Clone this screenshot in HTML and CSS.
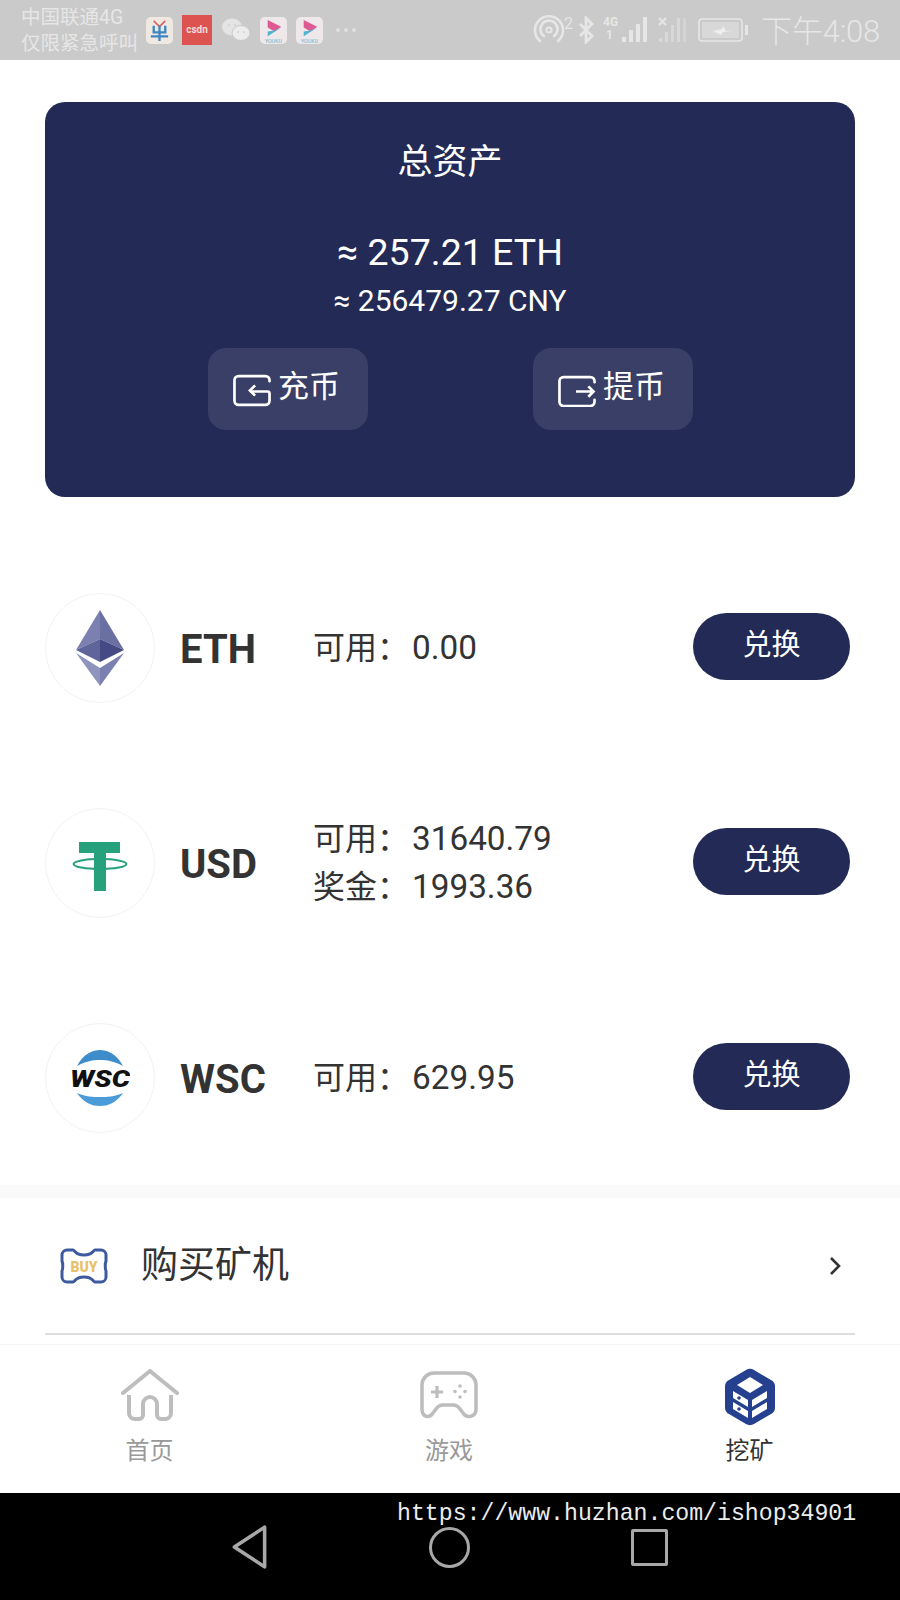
FILE: index.html
```html
<!DOCTYPE html>
<html lang="zh-CN">
<head>
    <meta charset="UTF-8">
    <title>资产</title>
    <link rel="stylesheet" href="styles.css">
</head>
<body>
    <div class="app">
        <!-- status bar -->
        <header class="status-bar">
            <div class="carrier">
                <p>中国联通4G</p>
                <p>仅限紧急呼叫</p>
            </div>
            <div class="notify-icons">
                <svg class="notify notify-round" viewBox="0 0 28 28"><rect width="28" height="28" rx="5" fill="#efe9e1"/><path d="M8 4l6 6 6-6" fill="none" stroke="#d8615f" stroke-width="1.6"/><path d="M8 9v7h12V9M5 20h18M14 9v16" fill="none" stroke="#3d86c6" stroke-width="2.4"/></svg>
                <div class="notify-csdn">csdn</div>
                <svg class="notify notify-wechat" viewBox="0 0 30 26"><ellipse cx="11" cy="10" rx="10" ry="8.500" fill="#e4e4e4"/><ellipse cx="20" cy="16" rx="9" ry="7.500" fill="#ececec" stroke="#cacaca"/><circle cx="8" cy="8" r="1.200" fill="#d4d4d4"/><circle cx="14" cy="8" r="1.200" fill="#d4d4d4"/><circle cx="17" cy="15" r="1" fill="#d4d4d4"/><circle cx="23" cy="15" r="1" fill="#d4d4d4"/></svg>
                <svg class="notify notify-round" viewBox="0 0 28 28"><rect width="28" height="28" rx="5" fill="#eee8ea"/><path d="M8 3l14 7-7 5-7-4z" fill="#dd5b92"/><path d="M22 11l-14 9v-5l7-1z" fill="#4fb3d0"/><text x="14" y="26.500" class="youku-text">YOUKU</text></svg>
                <svg class="notify notify-round" viewBox="0 0 28 28"><rect width="28" height="28" rx="5" fill="#eee8ea"/><path d="M8 3l14 7-7 5-7-4z" fill="#dd5b92"/><path d="M22 11l-14 9v-5l7-1z" fill="#4fb3d0"/><text x="14" y="26.500" class="youku-text">YOUKU</text></svg>
                <div class="notify-more">
                    <i></i><i></i><i></i>
                </div>
            </div>
            <div class="system-icons">
                <svg class="sys-hotspot" viewBox="0 0 44 30"><path d="M8 26a14 14 0 1 1 18 0M12 21a8.500 8.500 0 1 1 10 0" fill="none" stroke="#e6e6e6" stroke-width="2.600" stroke-linecap="round"/><circle cx="17" cy="15" r="2.600" fill="none" stroke="#e6e6e6" stroke-width="2"/><text x="32" y="14" class="sys-sup">2</text></svg>
                <svg class="sys-bt" viewBox="0 0 18 28"><path d="M3 8l12 12-6 6V2l6 6L3 20" fill="none" stroke="#e6e6e6" stroke-width="2.800"/></svg>
                <svg class="sys-signal" viewBox="0 0 46 30"><text x="0" y="11" class="sys-4g">4G</text><text x="3" y="24" class="sys-4g">1</text><rect x="19" y="22" width="4" height="5" fill="#e6e6e6"/><rect x="26" y="15" width="4" height="12" fill="#e6e6e6"/><rect x="33" y="9" width="4" height="18" fill="#e6e6e6"/><rect x="40" y="2" width="4" height="25" fill="#e6e6e6"/></svg>
                <svg class="sys-signal-off" viewBox="0 0 32 30"><path d="M3 3l7 7M10 3l-7 7" stroke="#e6e6e6" stroke-width="2"/><rect x="3" y="23" width="3" height="4" fill="#d8d8d8"/><rect x="9" y="17" width="3" height="10" fill="#d8d8d8"/><rect x="15" y="10" width="3" height="17" fill="#d8d8d8"/><rect x="21" y="3" width="3" height="24" fill="#d8d8d8"/><rect x="27" y="3" width="3" height="24" fill="#d4d4d4"/></svg>
                <svg class="sys-battery" viewBox="0 0 52 26"><rect x="1" y="2" width="43" height="22" rx="3" fill="none" stroke="#e6e6e6" stroke-width="1.600"/><rect x="4" y="5" width="37" height="16" fill="#d8d8d8"/><rect x="47" y="8" width="3" height="10" fill="#e6e6e6"/><path d="M15 14l9-2 1-3 3 5 6 0-9 1-2 3z" fill="#eeeeee"/></svg>
                <span class="clock">下午4:08</span>
            </div>
        </header>

        <main class="content">
            <section class="total-card">
                <h1 class="total-title">总资产</h1>
                <p class="total-eth">≈ 257.21 ETH</p>
                <p class="total-cny">≈ 256479.27 CNY</p>
                <div class="total-actions">
                    <a class="action-btn">
                        <svg class="action-icon" viewBox="0 0 38 32"><path d="M36 8V7a4 4 0 0 0-4-4H6a4 4 0 0 0-4 4v20a4 4 0 0 0 4 4h26a4 4 0 0 0 4-4v-7a2 2 0 0 0-2-2H18" fill="none" stroke="#fff" stroke-width="2.600" stroke-linecap="round" transform="translate(0 -1)"/><path d="M22 12l-5 5 5 5" fill="none" stroke="#fff" stroke-width="2.600" transform="translate(0 -1)"/></svg>
                        <span>充币</span>
                    </a>
                    <a class="action-btn">
                        <svg class="action-icon" viewBox="0 0 38 32"><path d="M36 8V7a4 4 0 0 0-4-4H6a4 4 0 0 0-4 4v20a4 4 0 0 0 4 4h26a4 4 0 0 0 4-4v-2" fill="none" stroke="#fff" stroke-width="2.600" stroke-linecap="round"/><path d="M18 17h17M30 12l5 5-5 5" fill="none" stroke="#fff" stroke-width="2.600"/></svg>
                        <span>提币</span>
                    </a>
                </div>
            </section>

            <section class="coin-list">
                <div class="coin-row">
                    <div class="coin-logo">
                        <svg class="logo-eth" viewBox="0 0 48 76">
                            <path d="M24 0L0 40l24-11z" fill="#7b80b0"/>
                            <path d="M24 0l24 40-24-11z" fill="#6b70a3"/>
                            <path d="M0 40l24-11v23z" fill="#5f649b"/>
                            <path d="M48 40L24 29v23z" fill="#454a85"/>
                            <path d="M0 43l24 15v18z" fill="#8f94bf"/>
                            <path d="M48 43L24 58v18z" fill="#7b80b0"/>
                        </svg>
                    </div>
                    <div class="coin-name">ETH</div>
                    <div class="coin-amounts">
                        <p>可用：<span class="num">0.00</span></p>
                    </div>
                    <a class="swap-btn">兑换</a>
                </div>

                <div class="coin-row">
                    <div class="coin-logo">
                        <svg class="logo-usd" viewBox="0 0 56 50">
                            <path d="M7 0h41v11H34v38H22V11H7z" fill="#26a17b"/>
                            <ellipse cx="28" cy="22" rx="26.500" ry="5" fill="none" stroke="#26a17b" stroke-width="2"/>
                        </svg>
                    </div>
                    <div class="coin-name">USD</div>
                    <div class="coin-amounts">
                        <p>可用：<span class="num">31640.79</span></p>
                        <p>奖金：<span class="num">1993.36</span></p>
                    </div>
                    <a class="swap-btn">兑换</a>
                </div>

                <div class="coin-row">
                    <div class="coin-logo">
                        <svg class="logo-wsc" viewBox="0 0 60 56">
                            <path d="M7 16C14 3 23 0 30 0s16 3 23 16C44 11 37 10 30 10s-14 1-23 6z" fill="#3f8ccb"/>
                            <path d="M7 43c9 4 16 4 23 4s14 0 23-4c-7 10-15 13-23 13S14 53 7 43z" fill="#4a9bd8"/>
                            <text x="0" y="37" class="wsc-text" textLength="60" lengthAdjust="spacingAndGlyphs">WSC</text>
                        </svg>
                    </div>
                    <div class="coin-name">WSC</div>
                    <div class="coin-amounts">
                        <p>可用：<span class="num">629.95</span></p>
                    </div>
                    <a class="swap-btn">兑换</a>
                </div>
            </section>

            <div class="band"></div>

            <a class="menu-row">
                <svg class="buy-icon" viewBox="0 0 48 36">
                    <path d="M7 2h6c2 0 2 5 11 5s9-5 11-5h6a5 5 0 0 1 5 5v6c-1 2-1 8 0 10v6a5 5 0 0 1-5 5h-6c-2 0-2-5-11-5s-9 5-11 5H7a5 5 0 0 1-5-5v-6c1-2 1-8 0-10V7a5 5 0 0 1 5-5z" fill="none" stroke="#3d5a9e" stroke-width="3"/>
                    <text x="24" y="23.500" class="buy-text">BUY</text>
                </svg>
                <span class="menu-label">购买矿机</span>
                <svg class="chevron" viewBox="0 0 12 20"><path d="M2 2l8 8-8 8" fill="none" stroke="#333" stroke-width="2.600"/></svg>
            </a>
            <div class="menu-line"></div>
        </main>

        <nav class="tab-bar">
            <a class="tab">
                <svg class="tab-icon" viewBox="0 0 58 52"><path d="M2 24L29 2l27 22" fill="none" stroke="#bdbdbd" stroke-width="4" stroke-linecap="round" stroke-linejoin="round"/><path d="M8 26v18a6 6 0 0 0 6 6h4a4 4 0 0 0 4-4V35a7 7 0 0 1 14 0v11a4 4 0 0 0 4 4h4a6 6 0 0 0 6-6V26" fill="none" stroke="#bdbdbd" stroke-width="4"/></svg>
                <span>首页</span>
            </a>
            <a class="tab">
                <svg class="tab-icon" viewBox="0 0 58 48"><path d="M14 2h30a12 12 0 0 1 12 12v24c0 8-9 10-13 4l-3-4c-2-3-4-4-7-4H23c-3 0-5 1-7 4l-3 4C9 48 2 46 2 38V14A12 12 0 0 1 14 2z" fill="none" stroke="#bdbdbd" stroke-width="3.600"/><path d="M11 21h12M17 15v12" stroke="#bdbdbd" stroke-width="3.200"/><circle cx="40" cy="15" r="1.800" fill="#bdbdbd"/><circle cx="40" cy="26" r="1.800" fill="#bdbdbd"/><circle cx="35" cy="20.500" r="1.800" fill="#bdbdbd"/><circle cx="45" cy="20.500" r="1.800" fill="#bdbdbd"/></svg>
                <span>游戏</span>
            </a>
            <a class="tab tab-active">
                <svg class="tab-icon tab-icon-mine" viewBox="0 0 50 58">
                    <path d="M21 2a8 8 0 0 1 8 0l17 10a7 7 0 0 1 4 6v22a7 7 0 0 1-4 6L29 56a8 8 0 0 1-8 0L4 46a7 7 0 0 1-4-6V18a7 7 0 0 1 4-6z" fill="#24408e"/>
                    <path d="M25 9l13 8-13 8-13-8z" fill="#fff"/>
                    <path d="M8 23l15 9v7L8 30zM42 23L27 32v7l15-9zM8 34l15 9v7L8 41zM42 34L27 43v7l15-9z" fill="#fff"/>
                    <circle cx="14" cy="30" r="1.800" fill="#24408e"/>
                    <circle cx="14" cy="41" r="1.800" fill="#24408e"/>
                </svg>
                <span>挖矿</span>
            </a>
        </nav>

        <footer class="nav-bar">
            <div class="watermark">https://www.huzhan.com/ishop34901</div>
            <div class="nav-keys">
                <svg class="nav-back" viewBox="0 0 36 44"><path d="M32 3L3 22l29 19z" fill="none" stroke="#a8a8a8" stroke-width="3.400" stroke-linejoin="round"/></svg>
                <div class="nav-home"></div>
                <div class="nav-recent"></div>
            </div>
        </footer>
    </div>
</body>
</html>
```

FILE: styles.css
```css
*{
    box-sizing: border-box;
}

body{
    font-family: Roboto, "Noto Sans CJK SC", sans-serif;
    background: #fff;
    margin: 0;
}

p, h1{
    margin: 0;
    font-weight: normal;
}

.app{
    width: 900px;
    height: 1600px;
    display: flex;
    flex-direction: column;
    overflow: hidden;
}

/* status bar */
.status-bar{
    height: 60px;
    flex: none;
    background: #cacaca;
    display: flex;
    align-items: center;
    padding: 0 20px 0 21px;
    color: #e6e6e6;
}

.carrier{
    width: 124px;
    font-size: 19.500px;
    line-height: 26px;
    margin-top: 1px;
    white-space: nowrap;
}

.notify-icons{
    display: flex;
    align-items: center;
    gap: 9px;
    margin-left: 1px;
}

.notify-round{
    width: 27px;
    height: 27px;
}

.youku-text{
    font-size: 5.500px;
    fill: #5fb0cc;
    text-anchor: middle;
}

.notify-csdn{
    width: 30px;
    height: 30px;
    background: #dc5350;
    color: #f4dcdc;
    font-size: 10px;
    font-weight: bold;
    text-align: center;
    line-height: 30px;
}

.notify-wechat{
    width: 30px;
    height: 26px;
}

.notify-more{
    display: flex;
    gap: 4px;
    margin-left: 4px;
}

.notify-more i{
    width: 4px;
    height: 4px;
    border-radius: 50%;
    background: #e0e0e0;
}

.system-icons{
    margin-left: auto;
    display: flex;
    align-items: center;
    gap: 4px;
}

.sys-hotspot{
    width: 44px;
    height: 30px;
}

.sys-sup{
    font-size: 16px;
    fill: #e6e6e6;
}

.sys-bt{
    width: 18px;
    height: 28px;
    margin-left: -3px;
}

.sys-signal{
    width: 46px;
    height: 30px;
    margin-left: 4px;
}

.sys-4g{
    font-size: 12px;
    font-weight: bold;
    fill: #e6e6e6;
}

.sys-signal-off{
    width: 32px;
    height: 30px;
    margin-left: 3px;
}

.sys-battery{
    width: 52px;
    height: 26px;
    margin-left: 6px;
}

.clock{
    font-size: 31px;
    font-weight: 300;
    margin: -3px 0 0 7px;
    letter-spacing: -.2px;
    white-space: nowrap;
}

.content{
    flex: 1;
    display: flex;
    flex-direction: column;
    min-height: 0;
}

/* total card */
.total-card{
    margin: 42px 45px 0;
    height: 395px;
    background: #222a55;
    border-radius: 20px;
    color: #fff;
    text-align: center;
    padding-top: 38px;
}

.total-title{
    font-size: 35px;
    line-height: 46px;
}

.total-eth{
    font-size: 37.500px;
    line-height: 46px;
    margin-top: 43px;
}

.total-cny{
    font-size: 30px;
    line-height: 40px;
    margin-top: 6px;
}

.total-actions{
    display: flex;
    gap: 165px;
    margin: 27px 0 0 163px;
}

.action-btn{
    width: 160px;
    height: 82px;
    background: #393f66;
    border-radius: 18px;
    display: flex;
    align-items: center;
    justify-content: center;
    gap: 6px;
    font-size: 31px;
    padding-right: 4px;
}

.action-btn span{
    position: relative;
    top: -6px;
}

.action-icon{
    width: 40px;
    height: 33px;
    margin-top: 3px;
}

/* coins */
.coin-list{
    margin-top: 96px;
    display: flex;
    flex-direction: column;
    gap: 105px;
    padding: 0 50px 0 45px;
}

.coin-row{
    height: 110px;
    display: flex;
    align-items: center;
    color: #333;
}

.coin-logo{
    width: 110px;
    height: 110px;
    flex: none;
    border: 1px solid #f2f2f2;
    border-radius: 50%;
    display: flex;
    align-items: center;
    justify-content: center;
}

.logo-eth{
    width: 48px;
    height: 76px;
}

.logo-usd{
    width: 56px;
    height: 50px;
    margin-top: 8px;
}

.logo-wsc{
    width: 60px;
    height: 56px;
}

.wsc-text{
    font-size: 24px;
    font-weight: 900;
    font-style: italic;
    fill: #111;
}

.coin-name{
    width: 133px;
    margin-left: 25px;
    font-size: 40px;
    font-weight: bold;
    padding-top: 2px;
}

.coin-amounts{
    flex: 1;
    font-size: 32px;
    line-height: 47px;
}

.num{
    font-size: 33.300px;
    margin-left: 3px;
}

.swap-btn{
    width: 157px;
    height: 67px;
    margin-top: -4px;
    background: #222a55;
    border-radius: 34px;
    color: #fff;
    font-size: 29px;
    text-align: center;
    line-height: 64px;
}

.band{
    height: 13px;
    margin-top: 52px;
    flex: none;
    background: #fafafa;
}

/* menu */
.menu-row{
    height: 135px;
    flex: none;
    display: flex;
    align-items: center;
    padding: 0 59px 0 60px;
    color: #333;
}

.buy-icon{
    width: 48px;
    height: 36px;
}

.buy-text{
    font-size: 14px;
    font-weight: 900;
    fill: #e8bf6a;
    text-anchor: middle;
}

.menu-label{
    font-size: 37px;
    margin-left: 33px;
    position: relative;
    top: -4px;
}

.chevron{
    width: 12px;
    height: 20px;
    margin-left: auto;
}

.menu-line{
    height: 2px;
    margin: 0 45px;
    flex: none;
    background: #dedede;
}

/* tabs */
.tab-bar{
    height: 149px;
    flex: none;
    border-top: 1px solid #f5f5f5;
    display: grid;
    grid-template-columns: 299px 300px 301px;
    background: #fff;
}

.tab{
    display: flex;
    flex-direction: column;
    align-items: center;
    color: #999;
    font-size: 24px;
    padding-top: 24px;
}

.tab-active{
    color: #333;
}

.tab-icon{
    width: 58px;
    height: 52px;
}

.tab span{
    line-height: 34px;
    margin-top: 13px;
}

.tab-icon-mine{
    width: 50px;
    height: 58px;
    margin-top: -1px;
    margin-bottom: -5px;
}

/* android keys */
.nav-bar{
    height: 107px;
    flex: none;
    background: #000;
    position: relative;
}

.watermark{
    position: absolute;
    top: 5px;
    left: 397px;
    font-family: "Liberation Mono", monospace;
    font-size: 23.200px;
    line-height: 32px;
    color: #ececec;
    white-space: nowrap;
}

.nav-keys{
    display: flex;
    align-items: center;
    padding: 31px 0 0 231px;
}

.nav-back{
    width: 38px;
    height: 46px;
}

.nav-home{
    width: 41px;
    height: 41px;
    border: 3px solid #a8a8a8;
    border-radius: 50%;
    margin-left: 160px;
}

.nav-recent{
    width: 37px;
    height: 37px;
    border: 3px solid #a8a8a8;
    border-radius: 2px;
    margin-left: 161px;
}
```
